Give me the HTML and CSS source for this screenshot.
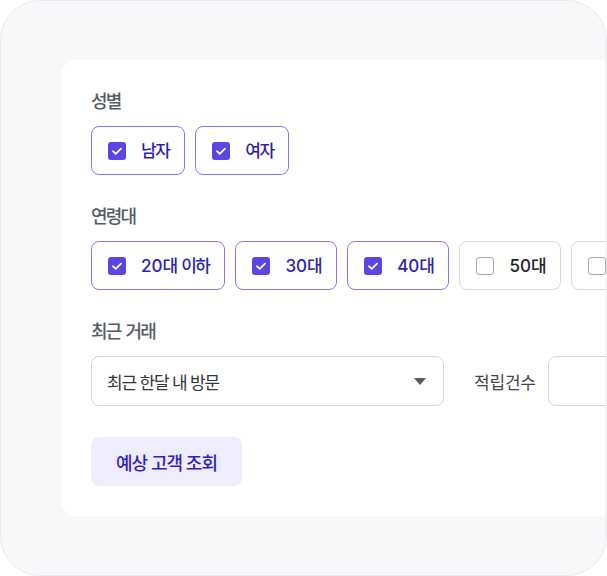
FILE: index.html
```html
<!DOCTYPE html>
<html lang="ko">
<head>
<meta charset="utf-8">
<link rel="stylesheet" href="styles.css">
</head>
<body>
<div class="frame">
  <div class="card">
    <section class="field">
      <div class="label">성별</div>
      <div class="chips">
        <label class="chip on"><span class="box"><svg viewBox="0 0 18 18"><path d="M5 9.2l2.7 2.6L13 6.6"/></svg></span><span class="txt">남자</span></label>
        <label class="chip on"><span class="box"><svg viewBox="0 0 18 18"><path d="M5 9.2l2.7 2.6L13 6.6"/></svg></span><span class="txt">여자</span></label>
      </div>
    </section>
    <section class="field">
      <div class="label">연령대</div>
      <div class="chips">
        <label class="chip on"><span class="box"><svg viewBox="0 0 18 18"><path d="M5 9.2l2.7 2.6L13 6.6"/></svg></span><span class="txt"><span class="num">20</span>대 이하</span></label>
        <label class="chip on"><span class="box"><svg viewBox="0 0 18 18"><path d="M5 9.2l2.7 2.6L13 6.6"/></svg></span><span class="txt"><span class="num">30</span>대</span></label>
        <label class="chip on"><span class="box"><svg viewBox="0 0 18 18"><path d="M5 9.2l2.7 2.6L13 6.6"/></svg></span><span class="txt"><span class="num">40</span>대</span></label>
        <label class="chip"><span class="box"></span><span class="txt"><span class="num">50</span>대</span></label>
        <label class="chip"><span class="box"></span><span class="txt"><span class="num">60</span>대 이상</span></label>
      </div>
    </section>
    <section class="field last">
      <div class="label">최근 거래</div>
      <div class="row">
        <div class="select"><span>최근 한달 내 방문</span><span class="caret"></span></div>
        <span class="inline-label">적립건수</span>
        <div class="input"></div>
      </div>
    </section>
    <button class="submit">예상 고객 조회</button>
  </div>
</div>
</body>
</html>
```
FILE: styles.css
```css
* { box-sizing: border-box; }
html, body { margin: 0; padding: 0; background: #ffffff; }
body {
  font-family: "Inter", "Noto Sans CJK KR", "Noto Sans", sans-serif;
  width: 607px;
  height: 576px;
  overflow: hidden;
}
.frame {
  width: 607px;
  height: 576px;
  background: #f7f8fa;
  border: 1px solid #e7e8ec;
  border-radius: 40px;
  overflow: hidden;
  padding: 59px 0 0 60px;
}
.card {
  width: 640px;
  background: #ffffff;
  border-radius: 16px;
  padding: 30px 30px 30px 30px;
  display: flex;
  flex-direction: column;
  align-items: flex-start;
}
.field {
  display: flex;
  flex-direction: column;
  gap: 12px;
  margin-bottom: 30px;
  width: 100%;
}
.field.last { margin-bottom: 31px; }
.label {
  font-size: 18px;
  line-height: 24px;
  color: #555a62;
  font-weight: 500;
  letter-spacing: -1.8px;
  word-spacing: 2px;
}
.chips {
  display: flex;
  gap: 10.5px;
  flex-wrap: nowrap;
}
.chip {
  flex: none;
  height: 49px;
  display: flex;
  align-items: center;
  gap: 15px;
  padding: 0 14.5px 0 16px;
  border: 1px solid #d9d9dc;
  border-radius: 8px;
  background: #fff;
  color: #222226;
}
.chip.on {
  border-color: #8577f5;
  color: #2b1fb6;
}
.box {
  width: 18px;
  height: 18px;
  border-radius: 3px;
  border: 1.5px solid #a9a9ad;
  background: #fff;
  display: flex;
}
.chip.on .box {
  border: none;
  background: #5a46e6;
}
.box svg {
  width: 18px;
  height: 18px;
  fill: none;
  stroke: #fff;
  stroke-width: 1.8;
  stroke-linecap: round;
  stroke-linejoin: round;
}
.txt {
  font-size: 17px;
  font-weight: 500;
  letter-spacing: -1.5px;
  word-spacing: 1.5px;
  line-height: 20px;
}
.num { letter-spacing: 0; }
.row {
  display: flex;
  align-items: center;
}
.select {
  flex: none;
  width: 353px;
  height: 50px;
  border: 1px solid #d6d6da;
  border-radius: 8px;
  display: flex;
  align-items: center;
  justify-content: space-between;
  padding: 0 17px 0 15px;
  font-size: 17px;
  color: #333338;
  letter-spacing: -1.2px;
}
.caret {
  width: 0;
  height: 0;
  border-left: 6.5px solid transparent;
  border-right: 6.5px solid transparent;
  border-top: 7px solid #5b5b60;
}
.inline-label {
  margin-left: 30px;
  font-size: 17px;
  color: #444448;
  letter-spacing: -0.2px;
}
.input {
  flex: none;
  margin-left: 12px;
  width: 120px;
  height: 50px;
  border: 1px solid #d6d6da;
  border-radius: 8px;
}
.submit {
  font-family: inherit;
  height: 49px;
  width: 151px;
  border: none;
  border-radius: 8px;
  background: #efecfe;
  color: #2d1fbf;
  font-size: 18px;
  font-weight: 500;
  letter-spacing: -1px;
  padding: 0;
}
```
